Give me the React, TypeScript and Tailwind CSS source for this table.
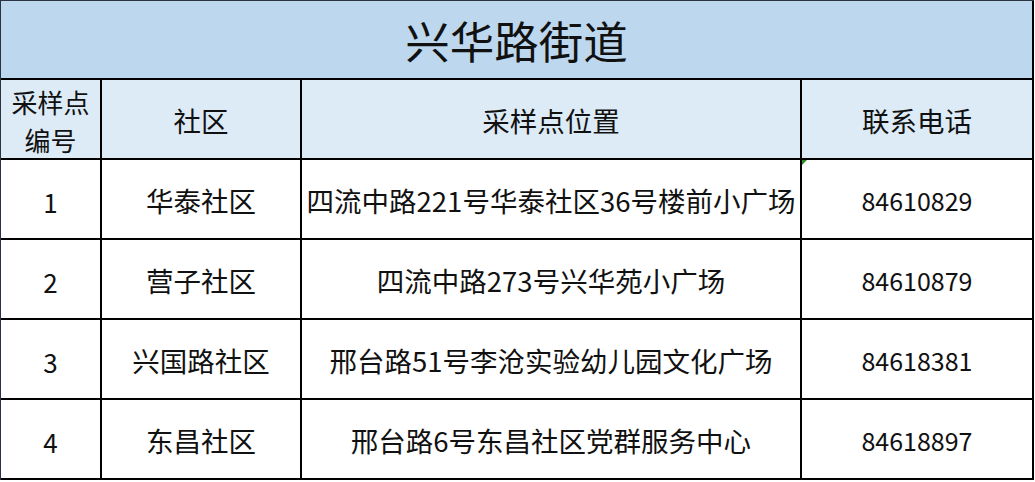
import React from "react";

const rows = [
  ["1", "华泰社区", "四流中路221号华泰社区36号楼前小广场", "84610829"],
  ["2", "营子社区", "四流中路273号兴华苑小广场", "84610879"],
  ["3", "兴国路社区", "邢台路51号李沧实验幼儿园文化广场", "84618381"],
  ["4", "东昌社区", "邢台路6号东昌社区党群服务中心", "84618897"],
];

export default function App() {
  return (
    <div
      className="w-[1035px] h-[482px] bg-white text-[#111]"
      style={{ fontFamily: '"Noto Sans CJK SC", "Noto Sans", sans-serif' }}
    >
      <div className="w-[1034px] border-l border-t border-[#2a3440]">
        <div className="h-[79px] bg-[#bdd7ee] border-b-2 border-r-2 border-black flex items-center justify-center text-[44.5px] leading-none pt-[2px]">
          兴华路街道
        </div>
        <div className="grid grid-cols-[99px_198px_498px_230px] grid-rows-[78px_78px_78px_78px_78px] gap-[2px] bg-black border-r-2 border-b-2 border-black text-[27.5px]">
          <div className="bg-[#ddebf7] flex flex-col items-center justify-center pt-[4px] text-[26px] leading-[38px]">
            <span>采样点</span>
            <span>编号</span>
          </div>
          <div className="bg-[#ddebf7] flex items-center justify-center pt-[4px]">社区</div>
          <div className="bg-[#ddebf7] flex items-center justify-center pt-[4px]">采样点位置</div>
          <div className="bg-[#ddebf7] flex items-center justify-center pt-[4px]">联系电话</div>
          {rows.map((r, i) => (
            <React.Fragment key={i}>
              <div className="bg-white flex items-center justify-center pt-[4px] text-[26px]">{r[0]}</div>
              <div className="bg-white flex items-center justify-center pt-[4px]">{r[1]}</div>
              <div className="bg-white flex items-center justify-center pt-[4px]">{r[2]}</div>
              <div className="bg-white flex items-center justify-center relative pt-[4px] text-[25px]">
                {i === 0 && (
                  <span className="absolute left-0 top-0 w-0 h-0 border-t-[5px] border-r-[5px] border-t-[#2e8b2e] border-r-transparent" />
                )}
                {r[3]}
              </div>
            </React.Fragment>
          ))}
        </div>
      </div>
    </div>
  );
}
